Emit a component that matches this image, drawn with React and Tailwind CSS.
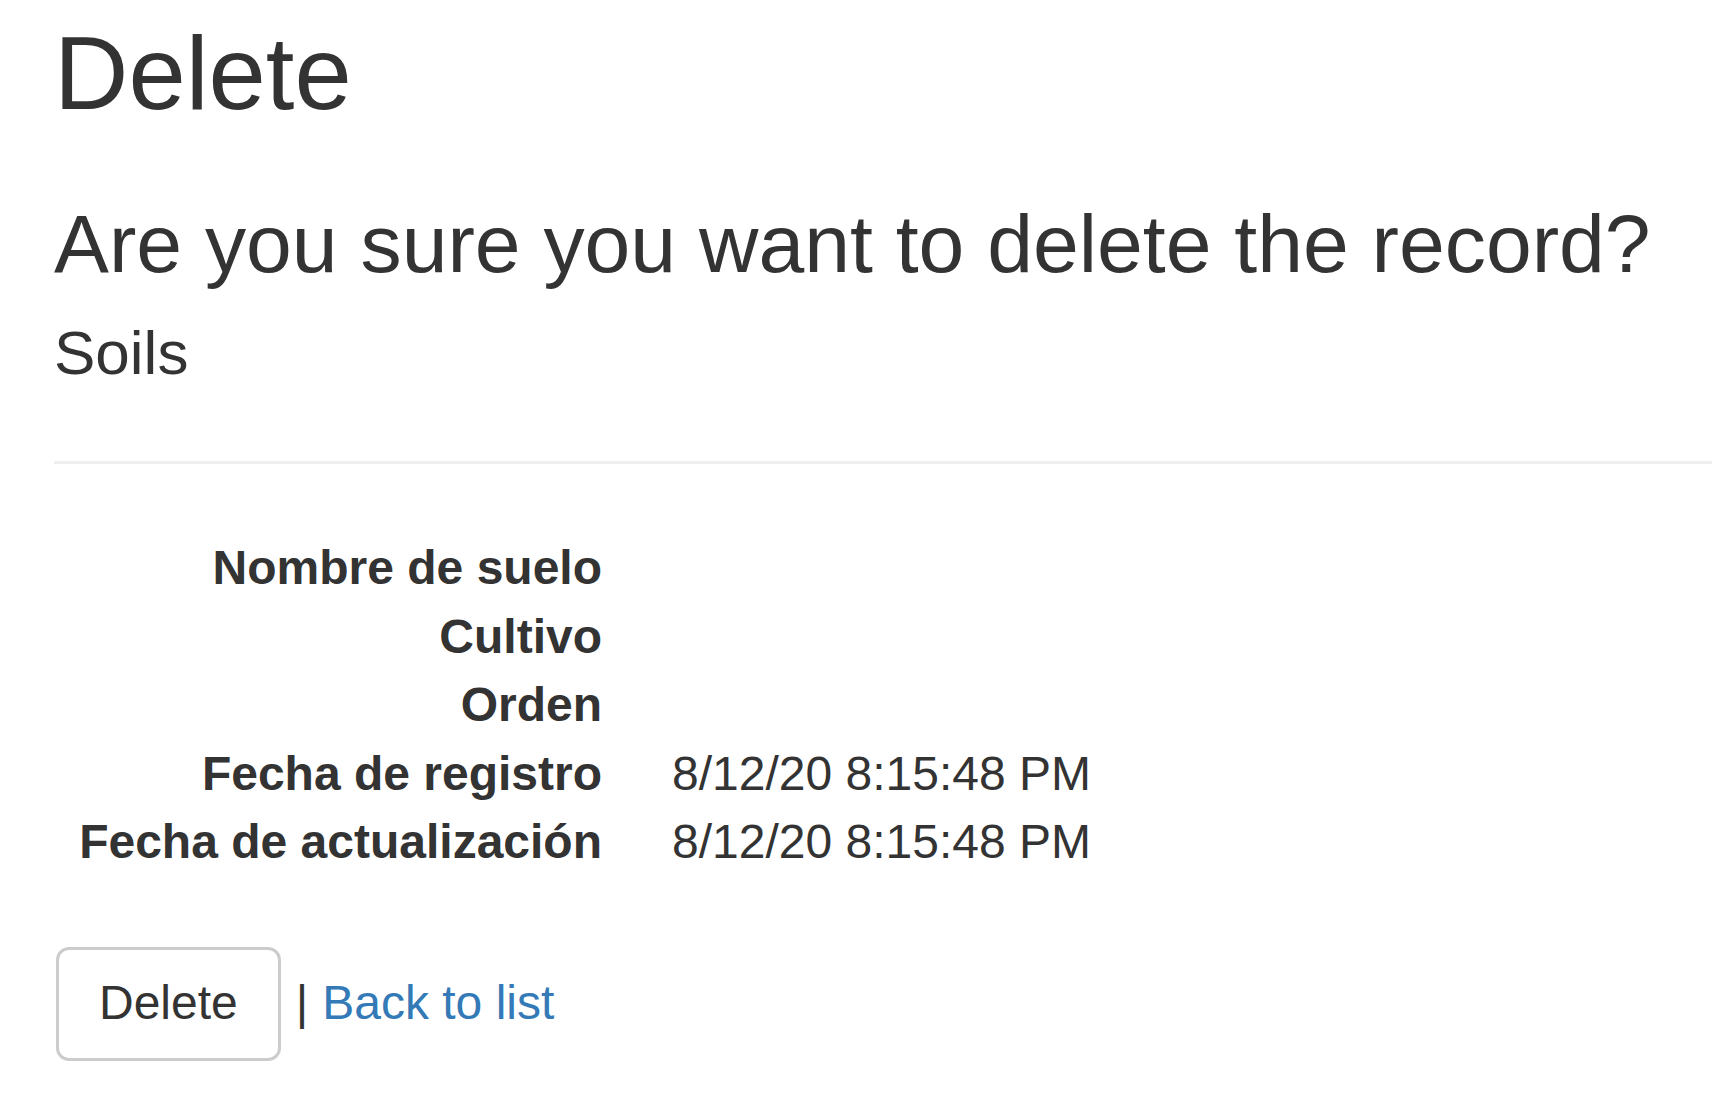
import React from "react";

const rows = [
  ["Nombre de suelo", ""],
  ["Cultivo", ""],
  ["Orden", ""],
  ["Fecha de registro", "8/12/20 8:15:48 PM"],
  ["Fecha de actualización", "8/12/20 8:15:48 PM"],
];

export default function App() {
  return (
    <div
      className="min-h-[1097px] w-full bg-white pl-[54px] text-[#333333]"
      style={{ fontFamily: '"Liberation Sans", Arial, sans-serif' }}
    >
      <h1 className="pt-[18px] text-[103px] leading-[112px] font-normal">Delete</h1>
      <h3 className="mt-[68px] text-[82.3px] leading-[90px] font-normal">
        Are you sure you want to delete the record?
      </h3>
      <div>
        <h4 className="mt-[31px] text-[62px] leading-[67px] font-normal">Soils</h4>
        <hr className="mt-[75px] border-0 border-t-[3px] border-[#eeeeee]" />
        <dl className="mt-[70px] text-[48px] leading-[68.5px]">
          {rows.map(([label, value]) => (
            <div key={label} className="flex">
              <dt className="w-[548px] shrink-0 text-right font-bold">{label}</dt>
              <dd className="ml-[70px]">{value || "\u00a0"}</dd>
            </div>
          ))}
        </dl>
        <form className="mt-[70px] pl-[2px] text-[48px] leading-[68.5px]">
          <button
            type="button"
            className="inline-block rounded-[13px] border-[3px] border-[#cccccc] bg-white px-[40px] pt-[19px] pb-[21px] text-[48px] leading-[68.5px] text-[#333333]"
          >
            Delete
          </button>
          <span className="ml-[15px]">|</span>
          <a href="#" className="ml-[14px] text-[#337ab7]">Back to list</a>
        </form>
      </div>
    </div>
  );
}
